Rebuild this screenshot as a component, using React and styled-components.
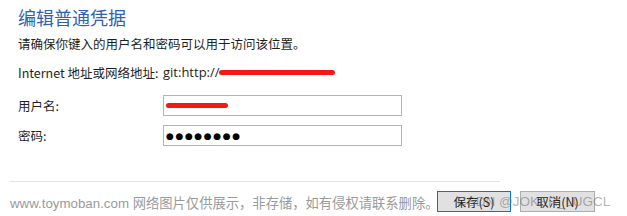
import React from 'react';
import styled, { createGlobalStyle } from 'styled-components';

const GlobalStyle = createGlobalStyle`
  html, body {
    margin: 0;
    padding: 0;
    background: #ffffff;
  }
  body {
    font-family: "Noto Sans CJK SC", "Noto Sans", sans-serif;
  }
`;

const Dialog = styled.div`
  position: relative;
  width: 627px;
  height: 216px;
  overflow: hidden;
  background: #ffffff;
  box-sizing: border-box;
  padding-top: 5px;
`;

const Content = styled.div`
  padding-left: 18px;
`;

const Title = styled.h1`
  margin: 0;
  font-size: 18px;
  line-height: 24px;
  font-weight: 400;
  color: #2f62b3;
`;

const Subtitle = styled.p`
  margin: 7px 0 0;
  font-size: 12.5px;
  line-height: 16px;
  color: #1e1e1e;
`;

const Form = styled.div`
  margin-top: 10px;
  display: flex;
  flex-direction: column;
`;

const Row = styled.div`
  display: flex;
  align-items: center;
  height: ${props => props.$height}px;
  margin-bottom: ${props => props.$gap || 0}px;
`;

const Label = styled.div`
  width: 145px;
  font-size: 12.5px;
  color: #1e1e1e;
  white-space: nowrap;
`;

const Value = styled.div`
  display: flex;
  align-items: center;
  font-family: "Open Sans", "Noto Sans", sans-serif;
  font-size: 13px;
  color: #1e1e1e;
`;

const Field = styled.div`
  width: 239px;
  height: 21px;
  box-sizing: border-box;
  border: 1px solid #b4b4b4;
  background: #fff;
  display: flex;
  align-items: center;
  padding-left: 2px;
`;

const Redact = styled.span`
  display: inline-block;
  width: ${props => props.$width}px;
  height: 5px;
  border-radius: 3px;
  background: #f21a12;
  margin-left: ${props => props.$offset || 0}px;
`;

const Dots = styled.span`
  font-family: "DejaVu Sans", sans-serif;
  font-size: 9px;
  letter-spacing: 1.6px;
  color: #000;
`;

const Separator = styled.div`
  margin: 35px 0 0 10px;
  width: 490px;
  height: 1px;
  background: #e3e3e3;
`;

const Buttons = styled.div`
  display: flex;
  gap: 9px;
  margin: 9px 0 0 437px;
`;

const Button = styled.button`
  width: ${props => props.$width}px;
  height: 21px;
  box-sizing: border-box;
  padding: 0;
  background: #e1e1e1;
  border: 1px solid ${props => (props.$primary ? '#0078d7' : '#adadad')};
  font-family: "Noto Sans CJK SC", sans-serif;
  font-size: 12.5px;
  color: #1e1e1e;
`;

const Watermark = styled.div`
  position: absolute;
  left: 10px;
  bottom: 3px;
  font-size: 13.3px;
  line-height: 18px;
  color: #9a9a9a;
  white-space: nowrap;
  font-family: "Liberation Sans", "Noto Sans CJK SC", sans-serif;
`;

const Csdn = styled.div`
  position: absolute;
  left: 457px;
  top: 194px;
  font-family: "Liberation Sans", "Noto Sans", sans-serif;
  font-size: 13.5px;
  color: rgba(110, 110, 110, 0.55);
  white-space: nowrap;
`;

export default function App() {
  return (
    <Dialog>
      <GlobalStyle />
      <Content>
        <Title>编辑普通凭据</Title>
        <Subtitle>请确保你键入的用户名和密码可以用于访问该位置。</Subtitle>
        <Form>
          <Row $height={20} $gap={13}>
            <Label>Internet 地址或网络地址:</Label>
            <Value>
              git:http://
              <Redact $width={116} $offset={-1} />
            </Value>
          </Row>
          <Row $height={21} $gap={9}>
            <Label>用户名:</Label>
            <Field>
              <Redact $width={62} $offset={0} />
            </Field>
          </Row>
          <Row $height={21}>
            <Label>密码:</Label>
            <Field>
              <Dots>●●●●●●●●</Dots>
            </Field>
          </Row>
        </Form>
      </Content>
      <Separator />
      <Buttons>
        <Button $primary $width={74}>保存(S)</Button>
        <Button $width={75}>取消(N)</Button>
      </Buttons>
      <Watermark>www.toymoban.com 网络图片仅供展示，非存储，如有侵权请联系删除。</Watermark>
      <Csdn>CSDN @JOKER_LUGCL</Csdn>
    </Dialog>
  );
}
